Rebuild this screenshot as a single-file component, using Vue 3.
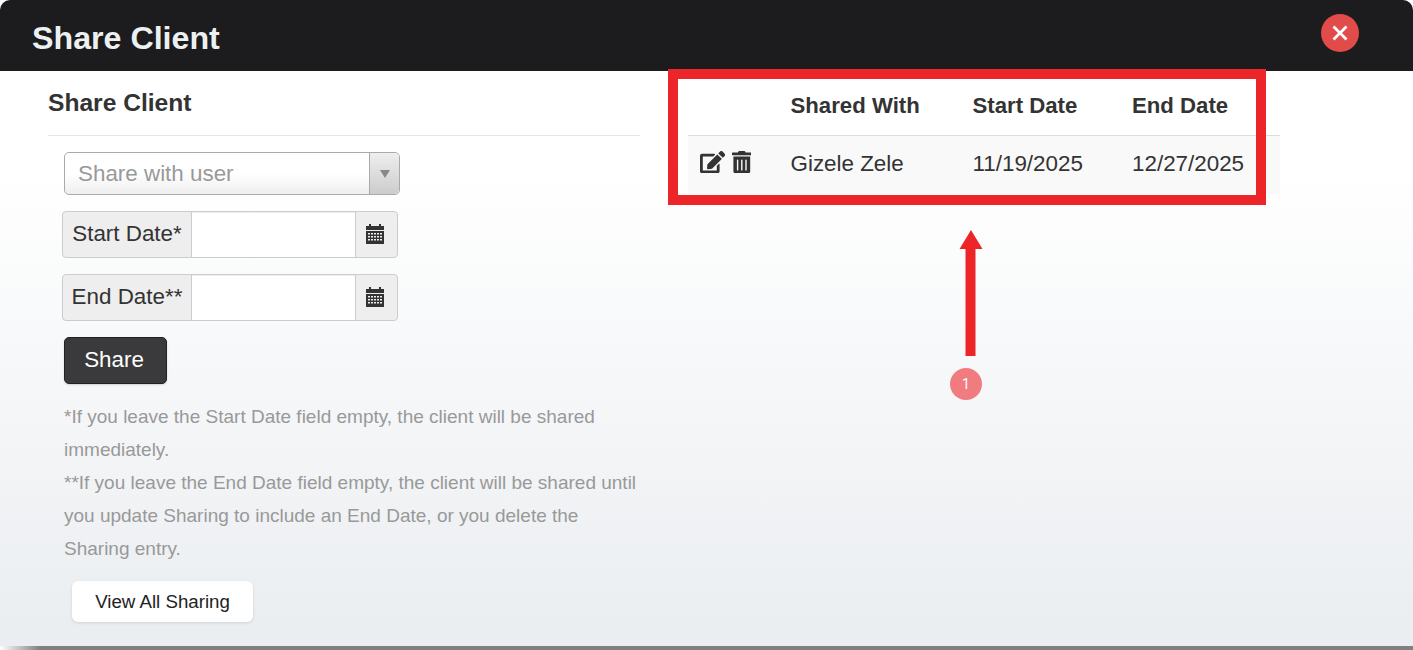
<template>
  <div class="modal">
    <header class="modal-header">
      <h1 class="modal-title">Share Client</h1>
      <button class="close-btn" aria-label="Close">
        <svg width="18" height="18" viewBox="0 0 18 18">
          <path d="M2.500 2.500 15.500 15.500M15.500 2.500 2.500 15.500" stroke="#fff" stroke-width="2.800" fill="none" />
        </svg>
      </button>
    </header>

    <div class="modal-body">
      <section class="left-col">
        <h2 class="section-title">Share Client</h2>
        <div class="form">
          <div class="select-box">
            <span class="select-text">Share with user</span>
            <span class="select-arrow"><i></i></span>
          </div>

          <div v-for="field in dateFields" :key="field" class="date-group">
            <span class="date-label">{{ field }}</span>
            <input class="date-input" type="text" />
            <span class="date-icon">
              <svg width="18" height="21" viewBox="0 0 18 21">
                <path fill="#333" d="M0 3h3V1h2v2h8V1h2v2h3v4H0z" />
                <path fill="#333" fill-rule="evenodd" d="M0 8h18v13H0zM2 10v1.500h2V10zm3 0v1.500h2V10zm3 0v1.500h2V10zm3 0v1.500h2V10zm3 0v1.500h2V10zM2 13v1.500h2V13zm3 0v1.500h2V13zm3 0v1.500h2V13zm3 0v1.500h2V13zm3 0v1.500h2V13zM2 16v1.500h2V16zm3 0v1.500h2V16zm3 0v1.500h2V16zm3 0v1.500h2V16zm3 0v1.500h2V16z" />
              </svg>
            </span>
          </div>

          <button class="share-btn">Share</button>

          <p class="note">
            *If you leave the Start Date field empty, the client will be shared immediately.<br />
            **If you leave the End Date field empty, the client will be shared until you update Sharing to include an End Date, or you delete the Sharing entry.
          </p>

          <button class="view-all">View All Sharing</button>
        </div>
      </section>

      <section class="right-col">
        <table class="share-table">
          <thead>
            <tr>
              <th class="col-actions"></th>
              <th class="col-user">Shared With</th>
              <th class="col-start">Start Date</th>
              <th>End Date</th>
            </tr>
          </thead>
          <tbody>
            <tr v-for="row in rows" :key="row.user">
              <td>
                <div class="actions">
                  <svg width="25.200" height="22.400" viewBox="0 0 576 512">
                    <path fill="#333" d="M402.600 83.200l90.200 90.200c3.800 3.800 3.800 10 0 13.800L274.400 405.600l-92.800 10.300c-12.400 1.400-22.900-9.100-21.500-21.500l10.300-92.800L388.800 83.200c3.800-3.800 10-3.800 13.800 0zm162-22.900l-48.800-48.800c-15.200-15.200-39.900-15.200-55.200 0l-35.400 35.400c-3.800 3.800-3.800 10 0 13.800l90.200 90.200c3.800 3.800 10 3.800 13.800 0l35.400-35.400c15.200-15.300 15.200-40 0-55.200zM384 346.200V448H64V128h229.800c3.200 0 6.200-1.300 8.500-3.500l40-40c7.600-7.600 2.200-20.500-8.500-20.500H48C21.500 64 0 85.500 0 112v352c0 26.500 21.500 48 48 48h352c26.500 0 48-21.500 48-48V306.200c0-10.700-12.900-16-20.500-8.500l-40 40c-2.200 2.300-3.500 5.300-3.500 8.500z" />
                  </svg>
                  <svg width="19.600" height="22.400" viewBox="0 0 448 512">
                    <path fill="#333" d="M32 464a48 48 0 0 0 48 48h288a48 48 0 0 0 48-48V128H32zm272-256a16 16 0 0 1 32 0v224a16 16 0 0 1-32 0zm-96 0a16 16 0 0 1 32 0v224a16 16 0 0 1-32 0zm-96 0a16 16 0 0 1 32 0v224a16 16 0 0 1-32 0zM432 32H312l-9.400-18.700A24 24 0 0 0 281.100 0H166.800a23.720 23.720 0 0 0-21.400 13.300L136 32H16A16 16 0 0 0 0 48v32a16 16 0 0 0 16 16h416a16 16 0 0 0 16-16V48a16 16 0 0 0-16-16z" />
                  </svg>
                </div>
              </td>
              <td>{{ row.user }}</td>
              <td>{{ row.start }}</td>
              <td>{{ row.end }}</td>
            </tr>
          </tbody>
        </table>
      </section>
    </div>

    <div class="highlight"></div>
    <svg class="arrow" width="26" height="128" viewBox="0 0 26 128">
      <path fill="#ec2529" d="M13 1 24.500 20H17.500V127H7.500V20H1.500z" />
    </svg>
    <span class="badge">1</span>
  </div>
  <div class="bottom-shadow"></div>
</template>

<script setup>
const dateFields = ['Start Date*', 'End Date**']

const rows = [
  { user: 'Gizele Zele', start: '11/19/2025', end: '12/27/2025' }
]
</script>

<style>
html,
body {
  margin: 0;
  background: #fff;
  overflow: hidden;
}
</style>

<style scoped>
.modal {
  position: relative;
  width: 1413px;
  height: 646px;
  background: linear-gradient(to bottom, #fff 170px, #ebeef1 625px);
  font-family: "Liberation Sans", Arial, sans-serif;
  color: #333;
  overflow: hidden;
  border-radius: 10px 10px 0 0;
}

.modal-header {
  display: flex;
  align-items: center;
  justify-content: space-between;
  height: 71px;
  padding: 0 54px 0 32px;
  box-sizing: border-box;
  background: #1c1c1e;
}

.modal-title {
  margin: 6px 0 0;
  font-size: 32.200px;
  font-weight: 700;
  color: #ecf0f1;
}

.close-btn {
  display: flex;
  align-items: center;
  justify-content: center;
  width: 38px;
  height: 38px;
  margin-top: -5px;
  padding: 0;
  border: none;
  border-radius: 50%;
  background: #e14c4a;
}

.modal-body {
  display: flex;
  gap: 48px;
  padding: 0 48px;
}

.left-col,
.right-col {
  width: 592px;
}

.section-title {
  margin: 0;
  height: 65px;
  line-height: 64px;
  font-size: 24.600px;
  font-weight: 700;
  border-bottom: 1px solid #e5e5e5;
  box-sizing: border-box;
}

.form {
  display: flex;
  flex-direction: column;
  align-items: flex-start;
  padding: 16px 0 0 14px;
}

.select-box {
  display: flex;
  width: 336px;
  height: 43px;
  margin-left: 2px;
  box-sizing: border-box;
  border: 1px solid #aaa;
  border-radius: 5px;
  background: linear-gradient(to bottom, #fff 50%, #eee 100%);
  font-size: 22.400px;
}

.select-text {
  flex: 1;
  padding-left: 13px;
  line-height: 41px;
  color: #999;
}

.select-arrow {
  display: flex;
  align-items: center;
  justify-content: center;
  width: 29px;
  border-left: 1px solid #aaa;
  border-radius: 0 5px 5px 0;
  background: linear-gradient(to bottom, #eee, #ccc);
}

.select-arrow i {
  width: 0;
  height: 0;
  border: 5px solid transparent;
  border-top: 8px solid #888;
  border-bottom: 0;
}

.date-group {
  display: flex;
  width: 336px;
  height: 47px;
  margin-top: 16px;
  box-sizing: border-box;
  border: 1px solid #ccc;
  border-radius: 4px;
  background: #eee;
  overflow: hidden;
}

.date-label {
  display: flex;
  align-items: center;
  justify-content: center;
  width: 128px;
  padding-bottom: 1px;
  box-sizing: border-box;
  font-size: 22.400px;
}

.date-input {
  width: 165px;
  padding: 0;
  box-sizing: border-box;
  border: none;
  border-left: 1px solid #ccc;
  border-right: 1px solid #ccc;
  outline: none;
  background: #fff;
  box-shadow: inset 0 1px 1px rgba(0, 0, 0, 0.075);
}

.date-icon {
  display: flex;
  flex: 1;
  align-items: center;
  justify-content: center;
  padding: 0 3px 2px 0;
}

.share-btn {
  width: 103px;
  height: 47px;
  margin: 16px 0 0 2px;
  padding: 0 3px 1px 0;
  border: 1px solid #222;
  border-radius: 5px;
  background: #3a3a3c;
  color: #fff;
  font-family: inherit;
  font-size: 22.400px;
  box-shadow: 0 1px 2px rgba(0, 0, 0, 0.15);
}

.note {
  width: 578px;
  margin: 16px 0 0 2px;
  font-size: 19px;
  line-height: 33px;
  color: #999;
}

.view-all {
  width: 181px;
  height: 41px;
  margin: 16px 0 0 10px;
  padding: 0;
  border: none;
  border-radius: 6px;
  background: #fff;
  color: #222;
  font-family: inherit;
  font-size: 18.700px;
  box-shadow: 0 1px 3px rgba(0, 0, 0, 0.12);
}

.share-table {
  width: 592px;
  border-collapse: collapse;
  table-layout: fixed;
  font-size: 22.400px;
}

.share-table th {
  height: 64px;
  padding: 6px 0 0;
  box-sizing: border-box;
  text-align: left;
  font-size: 22.200px;
  font-weight: 700;
  border-bottom: 1px solid #ddd;
}

.share-table td {
  height: 59px;
  padding: 0 0 2px;
  box-sizing: border-box;
  background: #f9f9f9;
}

.col-actions {
  width: 102.500px;
}

.col-user {
  width: 182px;
}

.col-start {
  width: 159.500px;
}

.actions {
  display: flex;
  align-items: center;
  gap: 6.500px;
  margin: -3px 0 0 12px;
}

.highlight {
  position: absolute;
  left: 668px;
  top: 69px;
  width: 598px;
  height: 136px;
  box-sizing: border-box;
  border: 10px solid #ec2529;
}

.arrow {
  position: absolute;
  left: 958px;
  top: 229px;
}

.badge {
  position: absolute;
  left: 950px;
  top: 368px;
  width: 32px;
  height: 32px;
  border-radius: 50%;
  background: #f07c80;
  color: #fff;
  font-family: Roboto, sans-serif;
  font-size: 14px;
  line-height: 33px;
  text-align: center;
}

.bottom-shadow {
  height: 4px;
  background: linear-gradient(to right, #fff 0, #808080 40px);
}
</style>
